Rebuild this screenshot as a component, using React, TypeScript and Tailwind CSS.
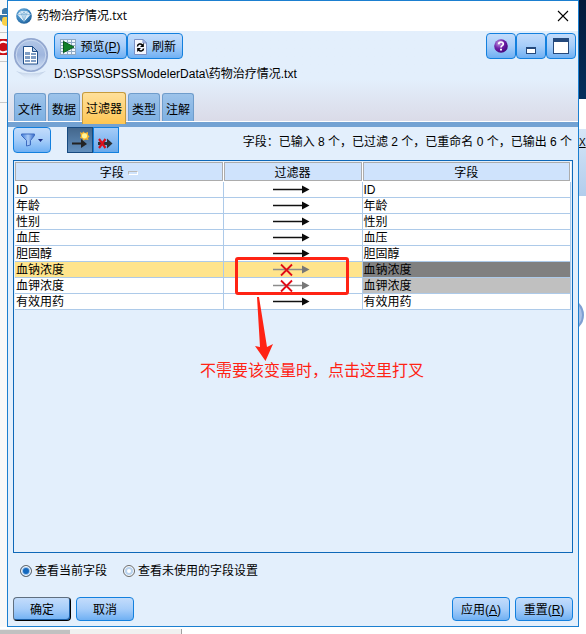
import type { ReactNode } from 'react';
import { clsx } from 'clsx';

const fields = [
  { name: 'ID', dropped: false },
  { name: '年龄', dropped: false },
  { name: '性别', dropped: false },
  { name: '血压', dropped: false },
  { name: '胆固醇', dropped: false },
  { name: '血钠浓度', dropped: true, selected: true },
  { name: '血钾浓度', dropped: true },
  { name: '有效用药', dropped: false },
];

const tabs = ['文件', '数据', '过滤器', '类型', '注解'];

type ButtonProps = {
  children: ReactNode;
  className?: string;
  label?: string;
  isDefault?: boolean;
};

const Button = ({ children, className, label, isDefault }: ButtonProps) => (
  <button
    type="button"
    aria-label={label}
    className={clsx(
      'flex items-center justify-center rounded-[4px] border bg-gradient-to-b from-[#c3dcfb] via-[#a6cdf9] to-[#6fb0f3]',
      isDefault
        ? 'border-t-[#5f6f80] border-l-[#5f6f80] border-r-black border-b-black shadow-[inset_-1px_-1px_0_#1a5fa8]'
        : 'border-[#1380de]',
      className,
    )}
  >
    {children}
  </button>
);

const AppIcon = () => (
  <svg width="16" height="16" viewBox="0 0 16 16" aria-hidden="true">
    <defs>
      <radialGradient id="appBall" cx="40%" cy="35%" r="70%">
        <stop offset="0" stopColor="#8cc3e8" />
        <stop offset="0.6" stopColor="#3b86c0" />
        <stop offset="1" stopColor="#1d5a94" />
      </radialGradient>
    </defs>
    <circle cx="8" cy="8" r="7.8" fill="url(#appBall)" />
    <path d="M4.5 3.8h7L14 6.6 8 13.2 2 6.6z" fill="#d9ecf8" stroke="#fff" strokeWidth="0.8" />
    <path d="M2 6.6h12M4.5 3.8l1.2 2.8L8 13l2.3-6.4 1.2-2.8M5.7 6.6L8 3.8l2.3 2.8M8 4v9" fill="none" stroke="#6ba5cf" strokeWidth="0.6" />
  </svg>
);

const NodeIcon = () => (
  <svg width="36" height="46" viewBox="0 0 36 46" aria-hidden="true">
    <defs>
      <linearGradient id="nodeFill" x1="0" y1="0" x2="0" y2="1">
        <stop offset="0" stopColor="#b3c8e8" />
        <stop offset="0.5" stopColor="#9fb6de" />
        <stop offset="1" stopColor="#d5e4f7" />
      </linearGradient>
      <linearGradient id="nodeShade" x1="0" y1="0" x2="0" y2="1">
        <stop offset="0" stopColor="#a9bcd9" stopOpacity="0.8" />
        <stop offset="1" stopColor="#dfe8f5" stopOpacity="0" />
      </linearGradient>
    </defs>
    <path d="M3 34c7 3 23 3 30 0-4 3-8 5-10 9-3-2-7-2-10 0-2-4-6-6-10-9z" fill="url(#nodeShade)" />
    <circle cx="18" cy="18" r="16.2" fill="url(#nodeFill)" stroke="#93a8d0" strokeWidth="1.8" />
    <circle cx="18" cy="18" r="14.8" fill="none" stroke="#c9d8ef" strokeWidth="1" />
    <path d="M10.500 9.500h9l5 5V27h-14z" fill="#fff" stroke="#22508a" />
    <path d="M19.500 9.500v5h5z" fill="#b5cbe7" stroke="#22508a" />
    <path d="M12 15h5v3h-5zM18 16h5v2h-5zM12 19h5v3h-5zM18 19h5v3h-5zM12 23h5v2h-5zM18 23h5v2h-5z" fill="#7f9dc4" />
  </svg>
);

const PreviewIcon = () => (
  <svg width="16" height="16" viewBox="0 0 16 16" aria-hidden="true">
    <path d="M0 0h16v16H0z" fill="#8fa9c4" />
    <path d="M1 1h2v2H1zM4 1h3v2H4zM8 1h3v2H8zM12 1h3v2h-3zM1 4h2v2H1zM1 7h2v2H1zM1 10h2v2H1zM1 13h2v2H1zM4 13h3v2H4zM8 13h3v2H8zM12 13h3v2h-3zM12 10h3v2h-3zM12 4h3v2h-3zM12 7h3v2h-3zM8 4h3v2H8zM8 10h3v2H8z" fill="#eef5fc" />
    <path d="M3.500 2.500L14 8 3.500 13.500z" fill="#12802a" stroke="#075a18" />
  </svg>
);

const RefreshIcon = () => (
  <svg width="14" height="16" viewBox="0 0 14 16" aria-hidden="true">
    <path d="M.5.5H9L12.500 4v11.500H.5z" fill="#f4f7ff" stroke="#7c90c4" />
    <path d="M9 .5V4h3.500z" fill="#b9c8ea" stroke="#7c90c4" />
    <path d="M3.500 7.500C3.500 5 6.500 4 8.500 6" fill="none" stroke="#000" strokeWidth="1.500" />
    <path d="M9.800 4v4H6z" fill="#000" />
    <path d="M9.500 9.500c0 2.500-3 3.300-5 1.500" fill="none" stroke="#000" strokeWidth="1.500" />
    <path d="M3.200 13V9H7z" fill="#000" />
  </svg>
);

const HelpIcon = () => (
  <svg width="14" height="14" viewBox="0 0 14 14" aria-hidden="true">
    <defs>
      <radialGradient id="helpBall" cx="35%" cy="30%" r="75%">
        <stop offset="0" stopColor="#c29be0" />
        <stop offset="0.5" stopColor="#7020a8" />
        <stop offset="1" stopColor="#42077a" />
      </radialGradient>
    </defs>
    <circle cx="7" cy="7" r="6.800" fill="url(#helpBall)" />
    <path d="M4.700 5.300c0-3 4.600-3 4.600-.3C9.300 6.700 7 6.500 7 8.500" fill="none" stroke="#fff" strokeWidth="1.700" />
    <path d="M6 9.700h2v1.800H6z" fill="#fff" />
  </svg>
);

const FunnelIcon = () => (
  <svg width="22" height="14" viewBox="0 0 22 14" aria-hidden="true">
    <defs>
      <linearGradient id="funnelFill" x1="0" x2="1">
        <stop offset="0" stopColor="#3f7ad8" />
        <stop offset="0.5" stopColor="#a9ccf8" />
        <stop offset="1" stopColor="#3468c8" />
      </linearGradient>
    </defs>
    <path d="M.5 1h13v1.500L9.500 7.500V12l-4 1V7.500L.5 2.500z" fill="url(#funnelFill)" stroke="#3d6bc0" />
    <path d="M17 6h5l-2.500 3z" fill="#1a2f86" />
  </svg>
);

const KeepIcon = () => (
  <svg width="24" height="24" viewBox="0 0 24 24" aria-hidden="true">
    <path d="M4 14.500h9V11l6 5-6 4v-3.500H4z" fill="#222" />
    <path d="M12 4l2 1 1.500-1.500L17 5l3-1v3l1.500 1.500L20 10l.500 2-3-.500-2 1-1-2-2.500-.500 1-2z" fill="#f9b62b" />
    <circle cx="16.500" cy="7.800" r="2.600" fill="#fff59a" />
  </svg>
);

const DropIcon = () => (
  <svg width="24" height="24" viewBox="0 0 24 24" aria-hidden="true">
    <path d="M4 14h9v-3.500l5.500 5-5.500 5V17H4z" fill="#2d3238" />
    <path d="M5 11l6.500 9M11.500 11L5 20" stroke="#d9101c" strokeWidth="2.200" />
  </svg>
);

const FlowArrow = ({ dropped }: { dropped: boolean }) => (
  <svg className="mx-auto block" width="44" height="15" viewBox="0 0 44 15" aria-hidden="true">
    <path d="M2 7.500h30" stroke={dropped ? '#8c8c8c' : '#111'} strokeWidth="1.500" />
    <path d="M31 3.500l7.500 4-7.500 4z" fill={dropped ? '#777' : '#0a0a0a'} />
    {dropped && <path d="M10 2.500l11 11M21 2.500l-11 11" stroke="#e00b17" strokeWidth="1.800" />}
  </svg>
);

const Header = () => (
  <header className="bg-gradient-to-b from-[#e3effc] via-[#e3effc] to-[#d9d8e5]">
    <div className="flex h-[61px] items-start gap-1 pt-0.5 pl-[5px] pr-0.5">
      <div className="pt-1">
        <NodeIcon />
      </div>
      <div className="ml-px flex-1">
        <div className="flex justify-between">
          <div className="flex">
            <Button className="h-[26px] w-[73px] gap-1 pt-0.5">
              <PreviewIcon />
              <span>预览(<u>P</u>)</span>
            </Button>
            <Button className="h-[26px] w-14 gap-1 pt-0.5">
              <RefreshIcon />
              刷新
            </Button>
          </div>
          <div className="flex">
            <Button label="帮助" className="h-[26px] w-[30px]">
              <HelpIcon />
            </Button>
            <Button label="最小化" className="h-[26px] w-[30px]">
              <span className="mt-2 h-[7px] w-2.5 border border-t-2 border-[#24497c] bg-white" />
            </Button>
            <Button label="最大化" className="h-[26px] w-[30px]">
              <span className="h-4 w-4 border border-t-4 border-[#24497c] bg-white" />
            </Button>
          </div>
        </div>
        <p className="pt-[5px] leading-5">D:\SPSS\SPSSModelerData\药物治疗情况.txt</p>
      </div>
    </div>
    <div role="tablist" className="flex h-[30px] items-end gap-0.5 border-b border-white pl-1.5">
      {tabs.map((tab) => {
        const active = tab === '过滤器';
        return (
          <button
            key={tab}
            type="button"
            role="tab"
            aria-selected={active}
            className={clsx(
              'rounded-t-[3px] border border-b-0',
              active
                ? 'z-10 -mb-[3px] h-8 w-11 border-[#c69b3c] bg-gradient-to-b from-[#ffe09a] to-[#ffc651]'
                : 'h-7 w-8 border-[#6f9dcc] bg-gradient-to-b from-[#9dc3ea] to-[#7eb0e2] pt-1',
            )}
          >
            {tab}
          </button>
        );
      })}
    </div>
    <div className="h-[5px] bg-[#73a2d3]" />
  </header>
);

const Toolbar = () => (
  <div className="flex items-start justify-between pl-[5px] pr-1.5">
    <div className="flex gap-4">
      <Button label="筛选" className="h-[26px] w-[38px]">
        <FunnelIcon />
      </Button>
      <div className="flex">
        <button type="button" aria-label="保留字段" className="h-[26px] w-[26px] border border-[#174a80] bg-gradient-to-b from-[#44678c] to-[#628fbd]">
          <KeepIcon />
        </button>
        <button type="button" aria-label="过滤字段" className="h-[26px] w-[26px] border border-[#1380de] bg-gradient-to-b from-[#a5ccf8] to-[#69a9eb]">
          <DropIcon />
        </button>
      </div>
    </div>
    <p className="pt-[5px] leading-5">字段：已输入 8 个，已过滤 2 个，已重命名 0 个，已输出 6 个</p>
  </div>
);

const FieldTable = () => (
  <table className="w-full table-fixed border-separate border-spacing-0 leading-[17px]">
    <colgroup>
      <col className="w-3/8" />
      <col className="w-1/4" />
      <col className="w-3/8" />
    </colgroup>
    <thead>
      <tr>
        {['字段', '过滤器', '字段'].map((title, i) => (
          <th key={i} className="h-5 bg-white pr-px pb-px font-normal">
            <div className="flex h-[19px] items-center justify-center gap-1 border border-[#acacac] bg-[#cfe3fc] pt-[3px]">
              {title}
              {i === 0 && <span className="h-1 w-2.5 border border-[#b9b9b9] border-r-white border-b-white" />}
            </div>
          </th>
        ))}
      </tr>
    </thead>
    <tbody>
      {fields.map(({ name, dropped, selected }) => (
        <tr key={name} className={selected ? 'bg-[#ffe48c]' : 'bg-white'}>
          <td className="border-r border-b border-[#adcae9] p-0 pl-px">
            <div className="h-[15px]">{name}</div>
          </td>
          <td className="border-r border-b border-[#adcae9] p-0">
            <FlowArrow dropped={dropped} />
          </td>
          <td
            className={clsx(
              'border-r border-b border-[#adcae9] p-0 pl-px',
              dropped && (selected ? 'bg-[#808080]' : 'bg-[#c0c0c0]'),
            )}
          >
            <div className="h-[15px]">{name}</div>
          </td>
        </tr>
      ))}
    </tbody>
  </table>
);

// red callout drawn over the two dropped rows
const Callout = () => (
  <div className="pointer-events-none absolute left-0 right-0.5 top-24 flex flex-col items-center text-[#ff2314]">
    <div className="h-[38px] w-[114px] rounded-[3px] border-3 border-[#ff2314]" />
    <svg className="-ml-14 mt-0.5" width="20" height="64" viewBox="0 0 20 64" aria-hidden="true">
      <path d="M3 0h2l8 50 6-3-7.500 17L1 49l5 1z" fill="#ff2314" />
    </svg>
    <p className="ml-10 whitespace-nowrap text-base leading-5">不需要该变量时，点击这里打叉</p>
  </div>
);

const Radio = ({ label, checked }: { label: string; checked?: boolean }) => (
  <label className="flex items-center gap-[3px]">
    <input
      type="radio"
      name="view"
      defaultChecked={checked}
      className="h-3 w-3 appearance-none rounded-full border border-[#6b6b6b] bg-white shadow-[inset_0_0_0_1px_#fff,inset_0_0_0_3px_#b9d3ee] checked:bg-[#1468bd] checked:shadow-[inset_0_0_0_1px_#fff,inset_0_0_0_2px_#9bc4ee]"
    />
    {label}
  </label>
);

export default function App() {
  return (
    <div className="flex min-h-screen flex-col bg-white font-['Liberation_Sans','Noto_Sans_CJK_SC',sans-serif] text-xs text-black">
      <div className="flex flex-1">
        {/* desktop showing on the left */}
        <div className="w-[7px] overflow-hidden bg-[#f8f8f8]">
          <svg width="7" height="104" viewBox="0 0 7 104" aria-hidden="true">
            <path d="M7 8C2 8 2 10 2 12v2h5v1H0v5l3 3h4z" fill="#3b78a9" />
            <path d="M7 17H4c-2 0-2 3-2 6 0 2 2 3 5 3z" fill="#f9d048" />
            <path d="M0 32.500h7M0 61.500h7M0 102.500h7" stroke="#c9c9c9" />
            <path d="M0 39h7v16H0z" fill="#cb1017" />
            <path d="M7 43C2 40-2 43-2 47s4 7 9 4" fill="none" stroke="#fff" strokeWidth="2" />
          </svg>
        </div>

        <main className="flex min-w-0 flex-1 flex-col border border-[#1b7fd0] bg-[#e3effc]">
          <div className="flex h-[30px] items-center justify-between bg-white px-2">
            <h1 className="flex items-center gap-[5px] font-['Open_Sans','Noto_Sans_CJK_SC',sans-serif]">
              <AppIcon />
              药物治疗情况.txt
            </h1>
            <button type="button" aria-label="关闭">
              <svg width="14" height="12" viewBox="0 0 14 12" aria-hidden="true">
                <path d="M2 1l10 10M12 1L2 11" stroke="#000" strokeWidth="1.100" />
              </svg>
            </button>
          </div>
          <Header />
          <Toolbar />
          <section className="relative mx-[5px] mt-[7px] flex-1 border border-[#0e68b8] p-px">
            <FieldTable />
            <Callout />
          </section>
          <footer className="px-[5px] pb-[5px]">
            <div className="flex gap-4 py-2 pl-[7px] leading-5">
              <Radio label="查看当前字段" checked />
              <Radio label="查看未使用的字段设置" />
            </div>
            <div className="flex justify-between pt-2">
              <div className="flex gap-[5px]">
                <Button className="h-6 w-[58px] pt-0.5" isDefault>确定</Button>
                <Button className="h-6 w-[58px] pt-0.5">取消</Button>
              </div>
              <div className="flex gap-[5px]">
                <Button className="h-6 w-[58px] pt-0.5"><span>应用(<u>A</u>)</span></Button>
                <Button className="h-6 w-[58px] pt-0.5"><span>重置(<u>R</u>)</span></Button>
              </div>
            </div>
          </footer>
        </main>

        {/* desktop showing on the right */}
        <div className="w-[7px]">
          <div className="h-[99px] bg-gradient-to-b from-[#03193a] to-[#042f5c]" />
          <div className="h-[30px]" />
          <div className="h-[67px] bg-gradient-to-b from-[#d6e6f7] to-[#b2cdec] pt-1 text-[10px] leading-5">
            <u>X</u>
          </div>
          <svg className="mt-[100px]" width="7" height="38" viewBox="0 0 7 38" aria-hidden="true">
            <circle cx="-12" cy="19" r="16" fill="#aac1e6" stroke="#7f9fd2" strokeWidth="2" />
          </svg>
        </div>
      </div>
      <div className="h-[7px] pt-0.5">
        <div className="h-[5px] w-[182px] border-r border-[#a0a0a0] bg-[#f0f0f0] pt-px">
          <div className="h-1 w-[70px] bg-[#c1c1c1]" />
        </div>
      </div>
    </div>
  );
}
